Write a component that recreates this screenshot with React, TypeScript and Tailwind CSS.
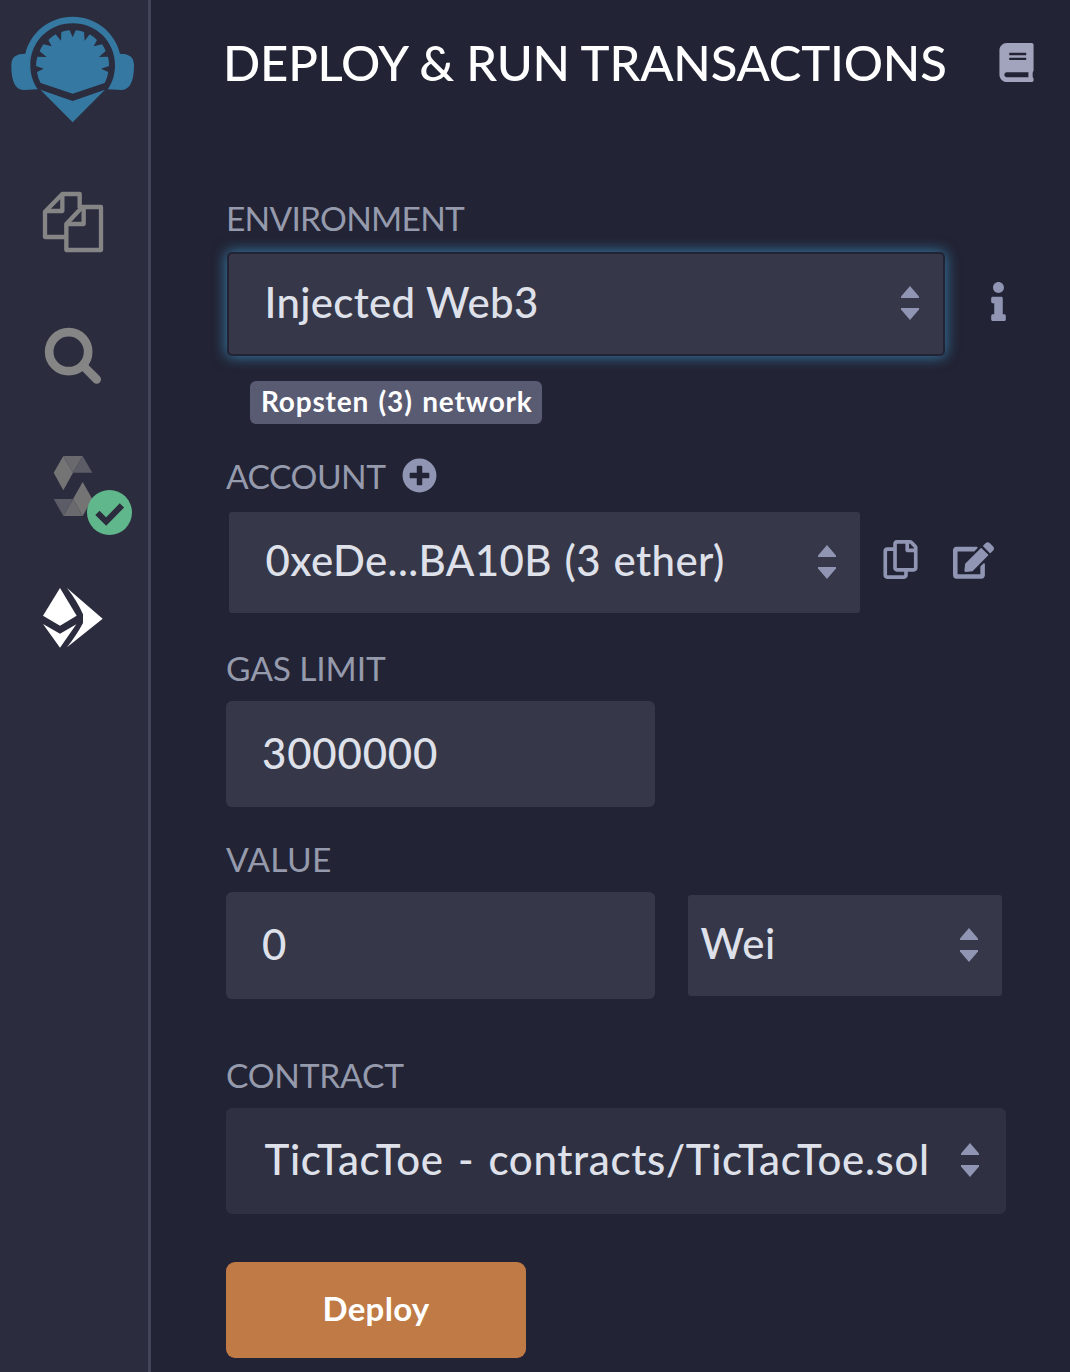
import React from "react";
import { FaBook, FaEdit, FaInfo, FaPlusCircle, FaRegCopy } from "react-icons/fa";

function Logo() {
  return (
    <svg viewBox="30 45 375 327" className="h-[109px] w-[125px] fill-[#3578a1]">
      <path d="M218 50C150 50 92 95 76 161C50 161 34 170 34 195C34 225 38 270 72 270L113 268C98 245 91 222 91 195C91 125 147 70 218 70C289 70 345 125 345 195C345 222 338 247 323 268L365 270C398 268 402 225 402 195C402 170 386 161 360 161C344 95 286 50 218 50Z" />
      <path d="M218 281L122 249Q113 234 111 216L131 206L108 198Q108 184 112 170L140 171L119 154Q123 143 130 133L155 139L145 120Q155 110 167 103L183 122L184 96Q196 92 209 91L218 112L227 91Q240 92 252 96L254 122L269 103Q281 110 291 120L281 139L306 133Q313 142 317 153L297 171L324 170Q328 184 327 198L303 206L325 216Q322 234 314 249Z" />
      <path d="M121 269L218 303L315 269L218 367Z" />
    </svg>
  );
}

function FilesIcon() {
  return (
    <svg viewBox="36 33 186 186" className="h-[62px] w-[62px] fill-none stroke-[#858585] stroke-[13]" strokeLinejoin="round">
      <path d="M109 171H45V95L97 42H149V84" />
      <path d="M97 42V93H45" />
      <path d="M109 132L157 81H213V210H109Z" />
      <path d="M161 81V132H109" />
    </svg>
  );
}

function SearchIcon() {
  return (
    <svg viewBox="42 442 174 174" className="h-[58px] w-[58px] fill-none stroke-[#858585] stroke-[26]" strokeLinecap="round">
      <circle cx="116" cy="516" r="58.5" />
      <path d="M160 559L200 599" />
    </svg>
  );
}

function SolidityIcon() {
  return (
    <svg viewBox="69 45 120 186" className="h-[62px] w-[40px]">
      <path fill="#747475" d="M100 48L71 98L100 151L129 98Z" />
      <path fill="#6a6a6e" d="M100 48H158L129 98Z" />
      <path fill="#5c5c67" d="M158 48L187 98H129Z" />
      <path fill="#747475" d="M158 126L187 177L158 228L129 177Z" />
      <path fill="#6a6a6e" d="M129 177L158 228H100Z" />
      <path fill="#5c5c67" d="M71 177H129L100 228Z" />
    </svg>
  );
}

function CheckBadge() {
  return (
    <svg viewBox="170 151 134 134" className="absolute left-[86.5px] top-[35.3px] h-[45px] w-[45px]">
      <circle cx="237" cy="218" r="67" fill="#61b78c" />
      <path d="M201 219L227 245L274 197" fill="none" stroke="#2b2c3e" strokeWidth="18" strokeLinejoin="miter" />
    </svg>
  );
}

function DeployIcon() {
  return (
    <svg viewBox="36 442 186 186" className="h-[62px] w-[62px] fill-white">
      <path d="M90 445L140 528L90 558L39 528Z" />
      <path d="M39 553L90 582L139 554L90 624Z" />
      <path d="M111 445L218 537L111 623Q142 583 159 550V524Q142 485 111 445Z" />
    </svg>
  );
}

function Carets() {
  return (
    <svg viewBox="0 0 18 34" className="-mt-[2px] h-[34px] w-[18px] shrink-0 fill-[#8f95b2]">
      <path d="M9 0L18 10.5V12H0V10.5Z" />
      <path d="M9 34L18 23.5V22H0V23.5Z" />
    </svg>
  );
}

function Label({ className, children }: { className: string; children: React.ReactNode }) {
  return <div className={`h-10 text-[33.6px] leading-10 text-[#959aac] ${className}`}>{children}</div>;
}

export default function App() {
  return (
    <div className="flex h-[1372px] w-[1070px] overflow-hidden bg-[#222334] font-['Lato','Noto_Sans',sans-serif] text-[42px] text-[#dfe1ea]">
      <nav className="flex w-[151px] shrink-0 flex-col border-r-[3px] border-[#444458] bg-[#2b2c3e]">
        <div className="ml-[10px] mt-[15px]"><Logo /></div>
        <div className="ml-[42px] mt-[67px] h-[62px]"><FilesIcon /></div>
        <div className="ml-[44px] mt-[74px] h-[58px]"><SearchIcon /></div>
        <div className="relative mt-[70px] h-[62px] pl-[53px]">
          <SolidityIcon />
          <CheckBadge />
        </div>
        <div className="ml-[42px] mt-[70px] h-[62px]"><DeployIcon /></div>
      </nav>

      <main className="flex min-w-0 flex-1 flex-col pl-[75px]">
        <header className="mt-[31px] flex h-[62px] items-center">
          <h1 className="-ml-[3px] w-[774px] whitespace-nowrap text-[49px] font-medium leading-[62px] tracking-[-0.2px] text-white">
            DEPLOY &amp; RUN TRANSACTIONS
          </h1>
          <FaBook className="h-[39px] w-[39px] text-[#a2a3bd]" />
        </header>

        <Label className="mt-[105px] tracking-[-0.768px]">ENVIRONMENT</Label>
        <div className="mt-[14px] flex items-center">
          <div className="ml-px flex h-[104px] w-[718px] items-center justify-between rounded-[5px] border-2 border-[#222334] bg-[#363748] pl-[35.5px] pr-[24px] shadow-[0_0_14px_1px_#3578a1]">
            <span className="-mt-1 font-medium tracking-[0.3px]">Injected Web3</span>
            <Carets />
          </div>
          <FaInfo className="-mt-[6px] ml-[34px] h-[39px] w-[39px] text-[#8f95b2]" />
        </div>
        <div className="ml-[24px] mt-[25px] h-[43px] w-[292px] whitespace-nowrap rounded-[6px] bg-[#595b73] pl-[11px] text-[28px] font-bold leading-[40px] tracking-[0.8px] text-white [word-spacing:2px]">
          Ropsten (3) network
        </div>

        <div className="mt-[32px] flex h-10 items-center">
          <Label className="w-[175.5px] tracking-[-0.5px]">ACCOUNT</Label>
          <FaPlusCircle className="-mt-[2px] h-[35px] w-[35px] text-[#8f95b2]" />
        </div>
        <div className="mt-4 flex items-center">
          <div className="ml-[3px] flex h-[101px] w-[631px] items-center justify-between rounded-[3px] bg-[#363748] pl-[36.5px] pr-[24px]">
            <span className="-mt-1 whitespace-nowrap font-medium tracking-[0.4px] [word-spacing:1.5px]">0xeDe...BA10B (3 ether)</span>
            <Carets />
          </div>
          <FaRegCopy className="-mt-[6px] ml-[21px] h-[39px] w-[39px] text-[#8f95b2]" />
          <FaEdit className="-mt-1 ml-[33px] h-[41px] w-[41px] text-[#8f95b2]" />
        </div>

        <Label className="mt-[35px] tracking-[-0.15px]">GAS LIMIT</Label>
        <div className="mt-[13px] flex h-[106px] w-[429px] items-center rounded-[6px] bg-[#363748] pl-[36px]">
          <span className="-mt-[2px] font-medium tracking-[0.8px]">3000000</span>
        </div>

        <Label className="mt-[32px] tracking-[0.321px]">VALUE</Label>
        <div className="mt-[13px] flex items-center">
          <div className="flex h-[107px] w-[429px] items-center rounded-[6px] bg-[#363748] pl-[36px]">
            <span className="-mt-[3px] font-medium">0</span>
          </div>
          <div className="ml-[33px] flex h-[101px] w-[314px] items-center justify-between rounded-[3px] bg-[#363748] pl-[12.5px] pr-[24px]">
            <span className="-mt-1 font-medium tracking-[0.5px]">Wei</span>
            <Carets />
          </div>
        </div>

        <Label className="mt-[56px] tracking-[-0.25px]">CONTRACT</Label>
        <div className="mt-[13px] flex h-[106px] w-[780px] items-center justify-between rounded-[6px] bg-[#2f3042] pl-[38.5px] pr-[27px]">
          <span className="-mt-1 whitespace-nowrap font-medium tracking-[0.65px] [word-spacing:3px]">TicTacToe - contracts/TicTacToe.sol</span>
          <Carets />
        </div>

        <button className="mt-[48px] h-[96px] w-[300px] rounded-[9px] bg-[#bf7a45] pb-[2px] text-[33px] font-bold tracking-[0.3px] text-white">
          Deploy
        </button>
      </main>
    </div>
  );
}
